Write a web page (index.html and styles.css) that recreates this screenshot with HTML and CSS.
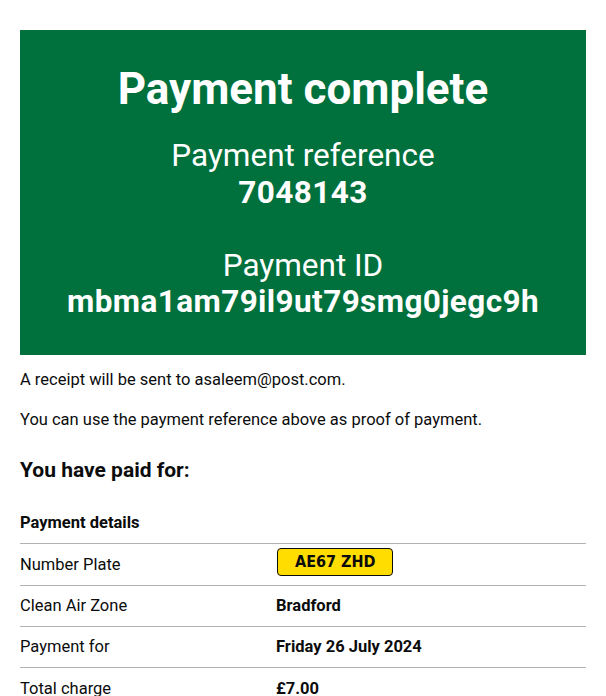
FILE: index.html
```html
<!DOCTYPE html>
<html lang="en">
<head>
<meta charset="utf-8">
<title>Payment complete</title>
<link rel="stylesheet" href="styles.css">
</head>
<body>
<main class="page">
  <div class="panel">
    <h1 class="panel-title">Payment complete</h1>
    <div class="panel-body">
      Payment reference<br><strong>7048143</strong><br><br>Payment ID<br><strong>mbma1am79il9ut79smg0jegc9h</strong>
    </div>
  </div>
  <p class="body">A receipt will be sent to asaleem@post.com.</p>
  <p class="body">You can use the payment reference above as proof of payment.</p>
  <h2 class="heading">You have paid for:</h2>
  <div class="summary">
    <div class="summary-caption">Payment details</div>
    <div class="summary-row">
      <div class="summary-key">Number Plate</div>
      <div class="summary-value"><span class="plate">AE67 ZHD</span></div>
    </div>
    <div class="summary-row">
      <div class="summary-key">Clean Air Zone</div>
      <div class="summary-value">Bradford</div>
    </div>
    <div class="summary-row">
      <div class="summary-key">Payment for</div>
      <div class="summary-value">Friday 26 July 2024</div>
    </div>
    <div class="summary-row">
      <div class="summary-key">Total charge</div>
      <div class="summary-value">£7.00</div>
    </div>
  </div>
</main>
</body>
</html>
```
FILE: styles.css
```css
html, body {
  margin: 0;
  padding: 0;
  background: #ffffff;
}
body {
  font-family: Roboto, "Liberation Sans", Arial, sans-serif;
  color: #0b0c0c;
}
.page {
  padding: 30px 20px 40px;
}
.panel {
  background: #00703c;
  color: #ffffff;
  text-align: center;
  padding: 34px 20px;
}
.panel-title {
  margin: 0 0 24px;
  font-size: 44px;
  line-height: 50px;
  font-weight: 700;
}
.panel-body {
  font-size: 31.5px;
  line-height: 36.5px;
  font-weight: 400;
}
.panel-body strong {
  font-weight: 700;
  letter-spacing: 0.4px;
}
.body {
  margin: 0 0 16px;
  font-size: 16.5px;
  line-height: 24px;
}
.panel + .body {
  margin-top: 13.4px;
}
.heading {
  margin: 24.4px 0 0;
  font-size: 21px;
  line-height: 28px;
  font-weight: 700;
}
.summary {
  margin-top: 26.6px;
  font-size: 16.5px;
  line-height: 24px;
}
.summary-caption {
  font-weight: 700;
  padding-bottom: 8.6px;
  border-bottom: 1px solid #b1b4b6;
}
.summary-row {
  display: grid;
  grid-template-columns: 256px 1fr;
  padding: 8.2px 0 8.1px;
  border-bottom: 1px solid #b1b4b6;
}
.summary-value {
  font-weight: 700;
}
.plate {
  display: block;
  width: fit-content;
  margin: -5px 0 1px 1px;
  padding: 0 17px;
  height: 26px;
  line-height: 26px;
  background: #ffdd00;
  border: 1px solid #0b0c0c;
  border-radius: 4px;
  font-family: "DejaVu Sans Condensed", "DejaVu Sans", sans-serif;
  font-size: 16px;
  font-weight: 700;
}
```
